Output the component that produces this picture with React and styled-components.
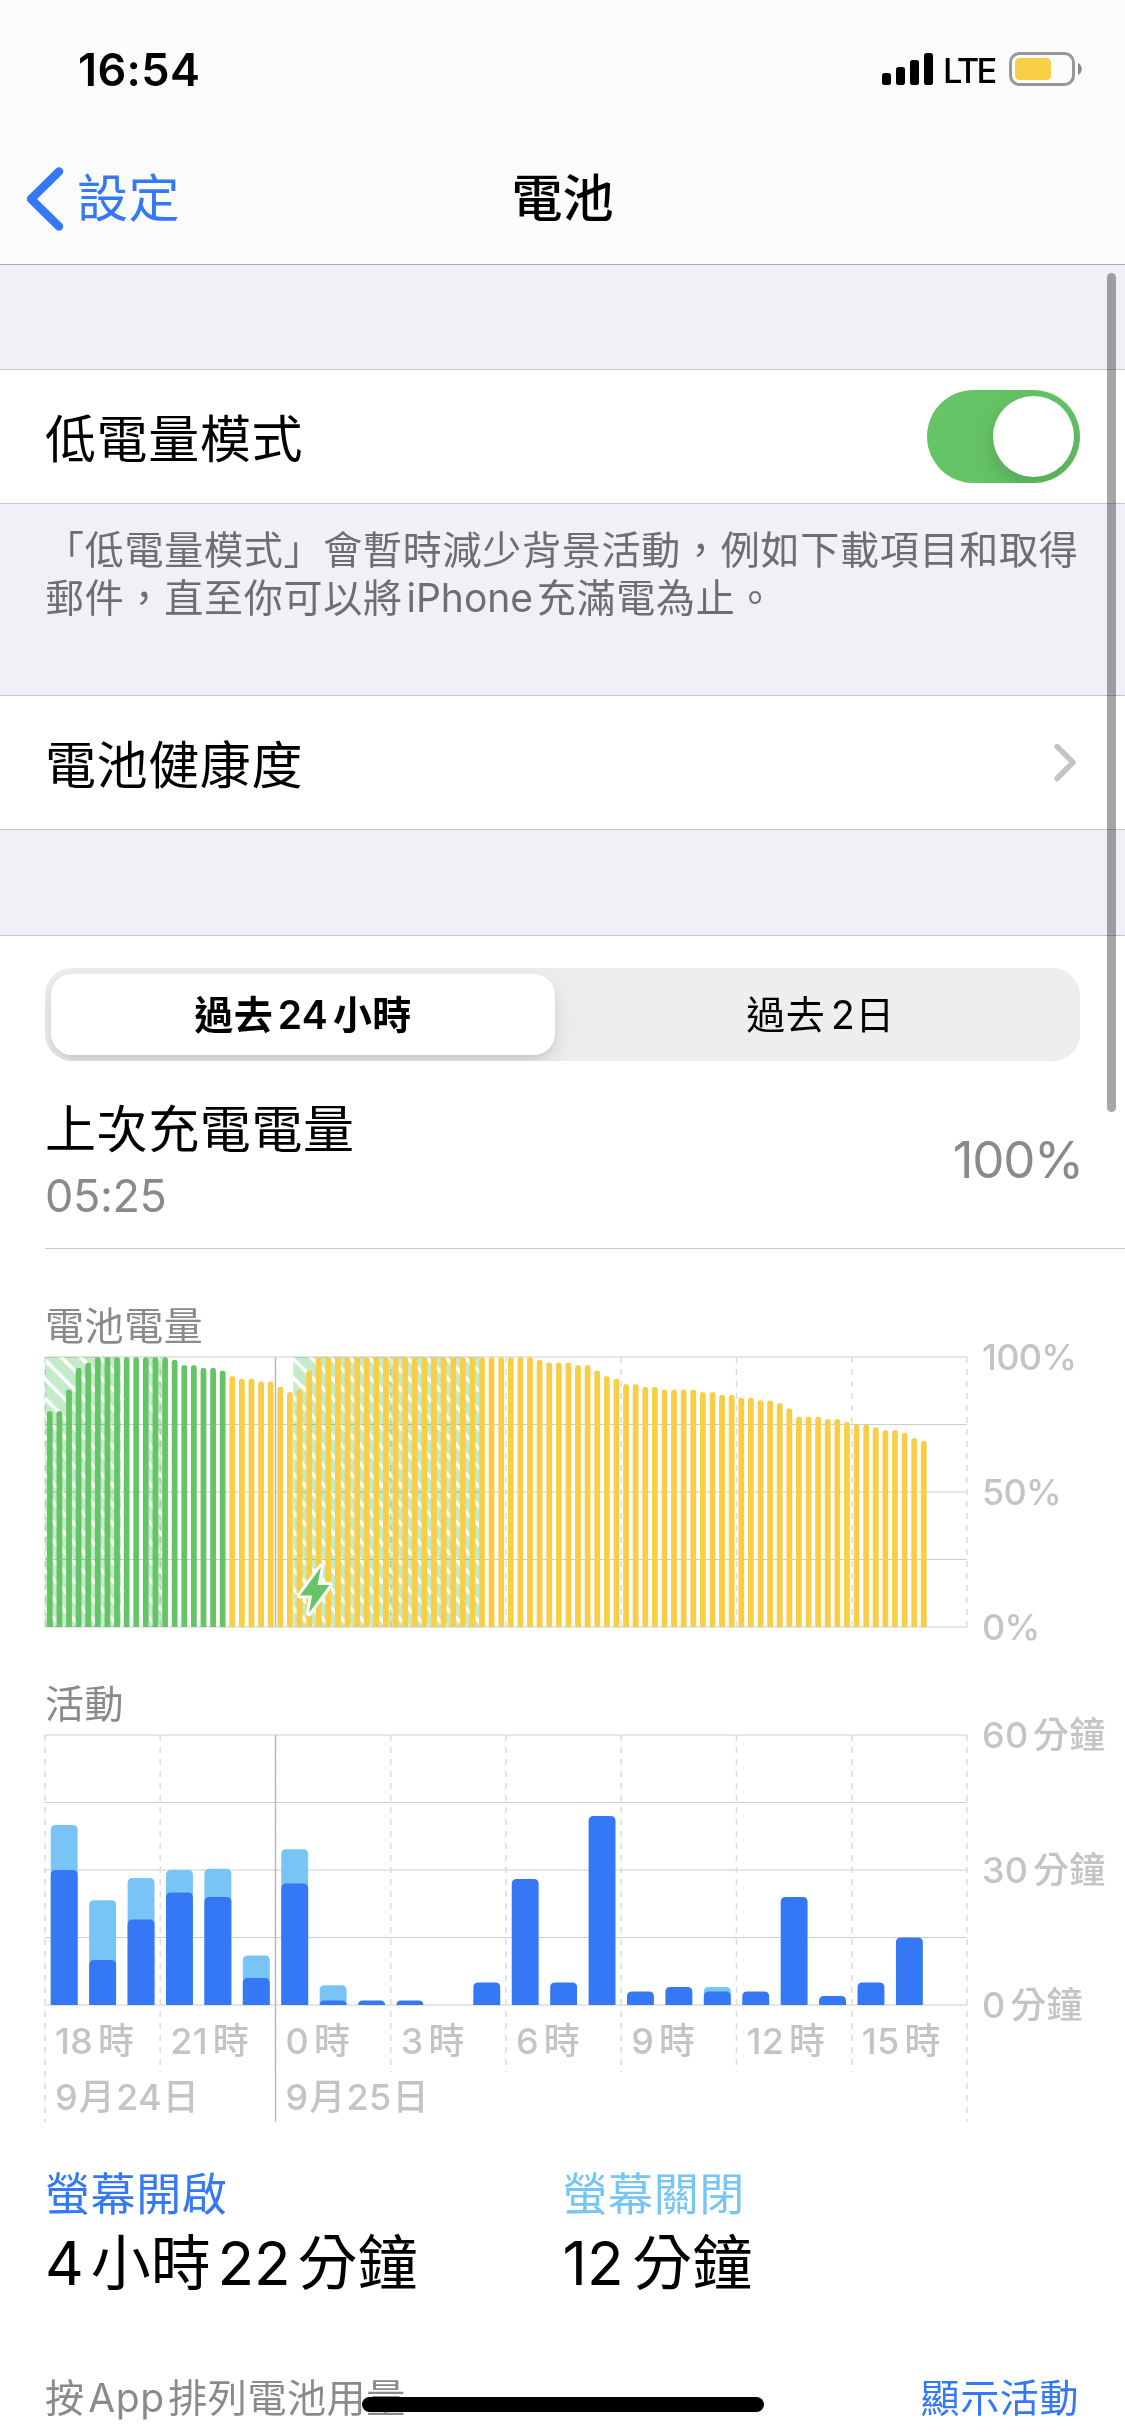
import React, { useState } from 'react';
import styled, { createGlobalStyle } from 'styled-components';

const Global = createGlobalStyle`
	html, body {
		margin: 0;
		padding: 0;
		background: #f1f0f6;
	}

	* {
		box-sizing: border-box;
	}
`;

const Screen = styled.div`
	position: relative;
	width: 1125px;
	height: 2436px;
	overflow: hidden;
	display: flex;
	flex-direction: column;
	background: #f1f0f6;
	color: #000;
	font-family: 'Inter', 'Noto Sans CJK TC', sans-serif;
	font-size: 51px;
	letter-spacing: 0.6px;
	white-space: nowrap;
`;

const TopBar = styled.header`
	flex: none;
	height: 265px;
	background: #fbfbfc;
	border-bottom: 1px solid #a9a9ac;
`;

const StatusBar = styled.div`
	height: 132px;
	padding: 6px 42px 0 78px;
	display: flex;
	align-items: center;
	justify-content: space-between;
`;

const Clock = styled.span`
	margin-top: 2px;
	font-size: 45px;
	line-height: 60px;
	font-weight: 600;
	letter-spacing: 0.4px;
`;

const StatusIcons = styled.div`
	display: flex;
	align-items: center;
`;

const Carrier = styled.span`
	width: 54px;
	margin: 4px 12px 0 10px;
	font-size: 34.5px;
	line-height: 40px;
	font-weight: 500;
	letter-spacing: -2.6px;
`;

const NavBar = styled.nav`
	height: 132px;
	padding: 2px 26px 0;
	display: grid;
	grid-template-columns: 1fr auto 1fr;
	align-items: center;
`;

const BackBtn = styled.a`
	display: flex;
	align-items: center;
	gap: 13px;
	color: #3478f6;
	line-height: 60px;
`;

const Title = styled.h1`
	margin: 0;
	font-size: 51px;
	font-weight: 500;
	line-height: 60px;
	letter-spacing: 0;
`;

const Cell = styled.div`
	flex: none;
	height: 135px;
	margin-top: ${(props) => props.$gap}px;
	padding: 0 45px;
	display: flex;
	align-items: center;
	justify-content: space-between;
	background: #fff;
	border-top: 1px solid #c6c6c9;
	border-bottom: 1px solid #c6c6c9;
	line-height: 60px;
`;

const CellLabel = styled.span`
	margin-top: 6px;
`;

const Toggle = styled.button`
	width: 153px;
	height: 93px;
	padding: 6px;
	display: flex;
	justify-content: ${(props) => (props.$on ? 'flex-end' : 'flex-start')};
	border: 0;
	border-radius: 47px;
	overflow: hidden;
	background: ${(props) => (props.$on ? '#65c466' : '#e9e9ea')};

	&::after {
		content: '';
		width: 81px;
		height: 81px;
		border-radius: 50%;
		background: #fff;
		box-shadow: 0 9px 24px rgba(0, 0, 0, 0.16);
	}
`;

const Footnote = styled.p`
	height: 191px;
	margin: 0;
	padding: 22px 45px 0;
	color: #6d6d72;
	font-size: 39px;
	line-height: 48px;
	letter-spacing: 0.75px;
	word-spacing: -8px;
`;

const Latin = styled.span`
	letter-spacing: 0;
`;

const Panel = styled.section`
	flex: 1;
	margin-top: 105px;
	padding-top: 32px;
	background: #fff;
	border-top: 1px solid #c6c6c9;
`;

const Segmented = styled.div`
	height: 93px;
	margin: 0 45px;
	padding: 6px;
	display: grid;
	grid-template-columns: 504px 1fr;
	border-radius: 27px;
	overflow: hidden;
	background: #eeeeef;
`;

const Segment = styled.button`
	padding: 0 0 5px ${(props) => (props.$active ? 0 : 12)}px;
	border: 0;
	border-radius: 21px;
	background: ${(props) => (props.$active ? '#fff' : 'transparent')};
	box-shadow: ${(props) => (props.$active ? '0 9px 24px rgba(0, 0, 0, 0.12), 0 4px 4px rgba(0, 0, 0, 0.05)' : 'none')};
	color: #000;
	font-family: inherit;
	font-size: 39px;
	font-weight: ${(props) => (props.$active ? 600 : 400)};
	letter-spacing: 0.4px;
	word-spacing: -5.5px;
`;

const LastCharge = styled.div`
	height: 188px;
	margin-left: 45px;
	padding: 38px 42px 0 0;
	display: flex;
	justify-content: space-between;
	border-bottom: 1px solid #c6c6c9;
`;

const ChargeTime = styled.div`
	margin-top: 5px;
	color: #8a8a8e;
	font-size: 45px;
	line-height: 60px;
	letter-spacing: -0.4px;
`;

const ChargeName = styled.div`
	line-height: 62px;
`;

const ChargeLevel = styled.div`
	margin-top: 30px;
	color: #8a8a8e;
	line-height: 62px;
	letter-spacing: -1.2px;
`;

const ChartTitle = styled.h2`
	margin: 53px 0 0 45px;
	color: #8a8a8e;
	font-size: 39px;
	font-weight: 400;
	line-height: 48px;
	letter-spacing: 0.6px;
`;

const Chart = styled.div`
	height: 270px;
	margin: 7px 0 0 45px;
	display: flex;

	& svg {
		flex: none;
		overflow: visible;
	}
`;

const YAxis = styled.div`
	height: 314px;
	margin: -22px 0 0 15px;
	display: flex;
	flex-direction: column;
	justify-content: space-between;
	color: #c4c4c6;
	font-size: 36px;
	font-weight: 500;
	line-height: 44px;
	letter-spacing: ${(props) => props.$tracking}px;
	word-spacing: -5px;
`;

const XAxis = styled.div`
	width: 922px;
	margin-left: 45px;
	padding-top: ${(props) => props.$top}px;
	display: grid;
	grid-template-columns: ${(props) => props.$columns};
	color: #c4c4c6;
	font-size: 36px;
	font-weight: 500;
	line-height: 44px;
	letter-spacing: 0.3px;
	word-spacing: ${(props) => props.$wordGap}px;

	& span {
		padding-left: 10px;
	}
`;

const Totals = styled.div`
	margin: 49px 45px 0;
	display: grid;
	grid-template-columns: 1fr 1fr;
`;

const TotalName = styled.div`
	color: ${(props) => props.$color};
	font-size: 45px;
	line-height: 54px;
`;

const TotalTime = styled.div`
	margin-top: 5px;
	font-size: 60px;
	line-height: 72px;
	letter-spacing: 0;
	word-spacing: ${(props) => props.$wordGap}px;
`;

const UsageHeader = styled.div`
	margin: 72px 46px 0 45px;
	display: flex;
	justify-content: space-between;
	color: #8a8a8e;
	font-size: 39px;
	line-height: 54px;
	word-spacing: -8px;
`;

const ShowActivity = styled.a`
	color: #3478f6;
`;

const ScrollBar = styled.div`
	position: absolute;
	top: 273px;
	right: 9px;
	width: 9px;
	height: 839px;
	border-radius: 5px;
	background: rgba(0, 0, 0, 0.35);
`;

const HomeIndicator = styled.div`
	position: absolute;
	left: 362px;
	bottom: 24px;
	width: 402px;
	height: 15px;
	border-radius: 8px;
	background: #000;
`;

const PLOT_WIDTH = 922;
const PLOT_HEIGHT = 270;
const HOUR = PLOT_WIDTH / 24;
const QUARTER = PLOT_WIDTH / 96;

const GREEN = '#65c466';
const YELLOW = '#f7ce46';
const BLUE = '#3478f6';
const LIGHT_BLUE = '#78c5f5';

// battery percentage, one value every 15 minutes
const levels = [
	80, 80, 88, 96, 98, 100, 100, 100, 100, 100, 100, 100, 100, 99, 97, 97,
	96, 96, 95, 93, 92, 92, 91, 91, 89, 87, 88, 95, 100, 100, 100, 100,
	100, 100, 100, 100, 100, 100, 100, 100, 100, 100, 100, 100, 100, 100, 100, 100,
	100, 100, 100, 99, 98, 98, 98, 97, 97, 95, 93, 92, 90, 90, 89, 89,
	88, 88, 88, 88, 87, 87, 86, 86, 85, 85, 84, 84, 83, 81, 78, 78,
	78, 77, 77, 76, 75, 75, 74, 73, 73, 72, 70, 69,
];

// low power mode is on from this bar
const LOW_POWER_FROM = 19;

const charging = [
	{ from: 0, to: 76 },
	{ from: 104, to: 117 },
	{ from: 248.3, to: 434.3 },
];

// minutes per hour: [screen on, total]
const activity = [
	[30, 40], [10, 23.3], [19, 28.2], [25, 30], [24, 30.3], [6, 11],
	[27, 34.6], [1, 4.4], [1, 1], [1, 1], [0, 0], [5, 5],
	[28, 28], [5, 5], [42, 42], [3, 3], [4, 4], [3, 4],
	[3, 3], [24, 24], [2, 2], [5, 5], [15, 15],
];

const hours = ['18 時', '21 時', '0 時', '3 時', '6 時', '9 時', '12 時', '15 時'];

// bar with only its upper corners rounded
const barPath = (x, width, height, radius) => {
	const r = Math.min(radius, height);
	const top = PLOT_HEIGHT - height;
	return `M${x} ${PLOT_HEIGHT}V${top + r}Q${x} ${top} ${x + r} ${top}H${x + width - r}Q${x + width} ${top} ${x + width} ${top + r}V${PLOT_HEIGHT}Z`;
};

const Grid = ({ tail = 0, edgeTail = 0 }) => (
	<g>
		{[0, 1, 2, 3, 4].map((v) => (
			<rect
				key={v}
				x="0"
				y={v % 2 ? Math.floor(v * 67.5) : v * 67.5 - 1}
				width={PLOT_WIDTH}
				height={v % 2 ? 1 : 2}
				fill={v % 2 ? '#cdcdcd' : '#e6e6e6'}
			/>
		))}
		{[0, 1, 2, 3, 4, 5, 6, 7, 8].map((v) => (
			<line
				key={v}
				x1={v * HOUR * 3}
				x2={v * HOUR * 3}
				y1="0"
				y2={PLOT_HEIGHT + (v % 8 ? tail : edgeTail)}
				stroke="#dcdcdc"
				strokeWidth="1.5"
				strokeDasharray="6 6"
			/>
		))}
		<line x1={HOUR * 6} x2={HOUR * 6} y1="0" y2={PLOT_HEIGHT + edgeTail} stroke="#b4b4b4" strokeWidth="1.3" />
	</g>
);

const BatteryChart = () => (
	<svg width={PLOT_WIDTH} height={PLOT_HEIGHT}>
		<defs>
			<pattern id="hatch" width="19.2" height="19.2" patternUnits="userSpaceOnUse" x="-3">
				<rect width="19.2" height="19.2" fill="#c3eac9" />
				<path d="M-19.2 -19.2L38.4 38.4M0 -19.2L38.4 19.2M-19.2 0L19.2 38.4" stroke="#fff" strokeWidth="3.6" />
			</pattern>
		</defs>
		{charging.map((v) => (
			<rect key={v.from} x={v.from} y="0" width={v.to - v.from} height={PLOT_HEIGHT} fill="url(#hatch)" />
		))}
		<g style={{ mixBlendMode: 'multiply' }}>
			<Grid />
		</g>
		{levels.map((v, i) => (
			<path
				key={i}
				d={barPath(i * QUARTER + QUARTER * 0.2, QUARTER * 0.6, (v / 100) * PLOT_HEIGHT, 2.9)}
				fill={i < LOW_POWER_FROM ? GREEN : YELLOW}
			/>
		))}
		<path
			d="M276 210L272.5 228H284.5L264 256L267 238.5H255Z"
			fill={GREEN}
			stroke="#fff"
			strokeWidth="6"
			strokeLinejoin="round"
			paintOrder="stroke"
		/>
	</svg>
);

const ActivityChart = () => (
	<svg width={PLOT_WIDTH} height={PLOT_HEIGHT}>
		<Grid tail={67} edgeTail={117} />
		{activity.map(([on, total], i) => (
			<g key={i}>
				{total > on && <path d={barPath((i + 0.15) * HOUR, HOUR * 0.7, total * 4.5, 5)} fill={LIGHT_BLUE} />}
				{on > 0 && <path d={barPath((i + 0.15) * HOUR, HOUR * 0.7, on * 4.5, 5)} fill={BLUE} />}
			</g>
		))}
	</svg>
);

const App = () => {
	const [lowPower, setLowPower] = useState(true);
	const [range, setRange] = useState('24h');

	return (
		<Screen>
			<Global />
			<TopBar>
				<StatusBar>
					<Clock>16:54</Clock>
					<StatusIcons>
						<svg width="51" height="34" viewBox="0 0 51 34">
							<rect x="0" y="21" width="9" height="12" rx="2.8" />
							<rect x="14" y="15" width="9" height="18" rx="2.8" />
							<rect x="28" y="8" width="9" height="25" rx="2.8" />
							<rect x="42" y="1" width="9" height="32" rx="2.8" />
						</svg>
						<Carrier>LTE</Carrier>
						<svg width="74" height="34" viewBox="0 0 74 34">
							<rect x="1.5" y="1.5" width="63" height="31" rx="9" fill="none" stroke="#989899" strokeWidth="3" />
							<rect x="6" y="6" width="36" height="22" rx="4.5" fill={YELLOW} />
							<path d="M69 11C74 13 74 21 69 23Z" fill="#8a8a8c" />
						</svg>
					</StatusIcons>
				</StatusBar>
				<NavBar>
					<BackBtn>
						<svg width="38" height="64" viewBox="0 0 38 64" fill="none">
							<path d="M33 4.5L5 32L33 59.5" stroke={BLUE} strokeWidth="8.5" strokeLinecap="round" strokeLinejoin="round" />
						</svg>
						<span>設定</span>
					</BackBtn>
					<Title>電池</Title>
				</NavBar>
			</TopBar>

			<Cell $gap={104}>
				<CellLabel>低電量模式</CellLabel>
				<Toggle $on={lowPower} onClick={() => setLowPower(!lowPower)} aria-label="低電量模式" />
			</Cell>
			<Footnote>
				「低電量模式」會暫時減少背景活動，例如下載項目和取得
				<br />
				郵件，直至你可以將 <Latin>iPhone</Latin> 充滿電為止。
			</Footnote>
			<Cell $gap={0}>
				<CellLabel>電池健康度</CellLabel>
				<svg width="26" height="38" viewBox="0 0 26 38" fill="none">
					<path d="M3 2.5L19 18.5L3 34.5" stroke="#c4c4c7" strokeWidth="5.5" strokeLinecap="round" strokeLinejoin="round" />
				</svg>
			</Cell>

			<Panel>
				<Segmented>
					<Segment $active={range === '24h'} onClick={() => setRange('24h')}>
						過去 24 小時
					</Segment>
					<Segment $active={range === '2d'} onClick={() => setRange('2d')}>
						過去 2日
					</Segment>
				</Segmented>

				<LastCharge>
					<div>
						<ChargeName>上次充電電量</ChargeName>
						<ChargeTime>05:25</ChargeTime>
					</div>
					<ChargeLevel>100%</ChargeLevel>
				</LastCharge>

				<ChartTitle>電池電量</ChartTitle>
				<Chart>
					<BatteryChart />
					<YAxis $tracking={-0.7}>
						<span>100%</span>
						<span>50%</span>
						<span>0%</span>
					</YAxis>
				</Chart>

				<ChartTitle>活動</ChartTitle>
				<Chart>
					<ActivityChart />
					<YAxis $tracking={0.2}>
						<span>60 分鐘</span>
						<span>30 分鐘</span>
						<span>0 分鐘</span>
					</YAxis>
				</Chart>
				<XAxis $top={14} $columns="repeat(8, 1fr)" $wordGap={-5}>
					{hours.map((v) => (
						<span key={v}>{v}</span>
					))}
				</XAxis>
				<XAxis $top={12} $columns="1fr 3fr" $wordGap={-9}>
					<span>9 月 24 日</span>
					<span>9 月 25 日</span>
				</XAxis>

				<Totals>
					<div>
						<TotalName $color={BLUE}>螢幕開啟</TotalName>
						<TotalTime $wordGap={-10}>4 小時 22 分鐘</TotalTime>
					</div>
					<div>
						<TotalName $color={LIGHT_BLUE}>螢幕關閉</TotalName>
						<TotalTime $wordGap={-8}>12 分鐘</TotalTime>
					</div>
				</Totals>

				<UsageHeader>
					<span>按 App 排列電池用量</span>
					<ShowActivity>顯示活動</ShowActivity>
				</UsageHeader>
			</Panel>

			<ScrollBar />
			<HomeIndicator />
		</Screen>
	);
};

export default App;
